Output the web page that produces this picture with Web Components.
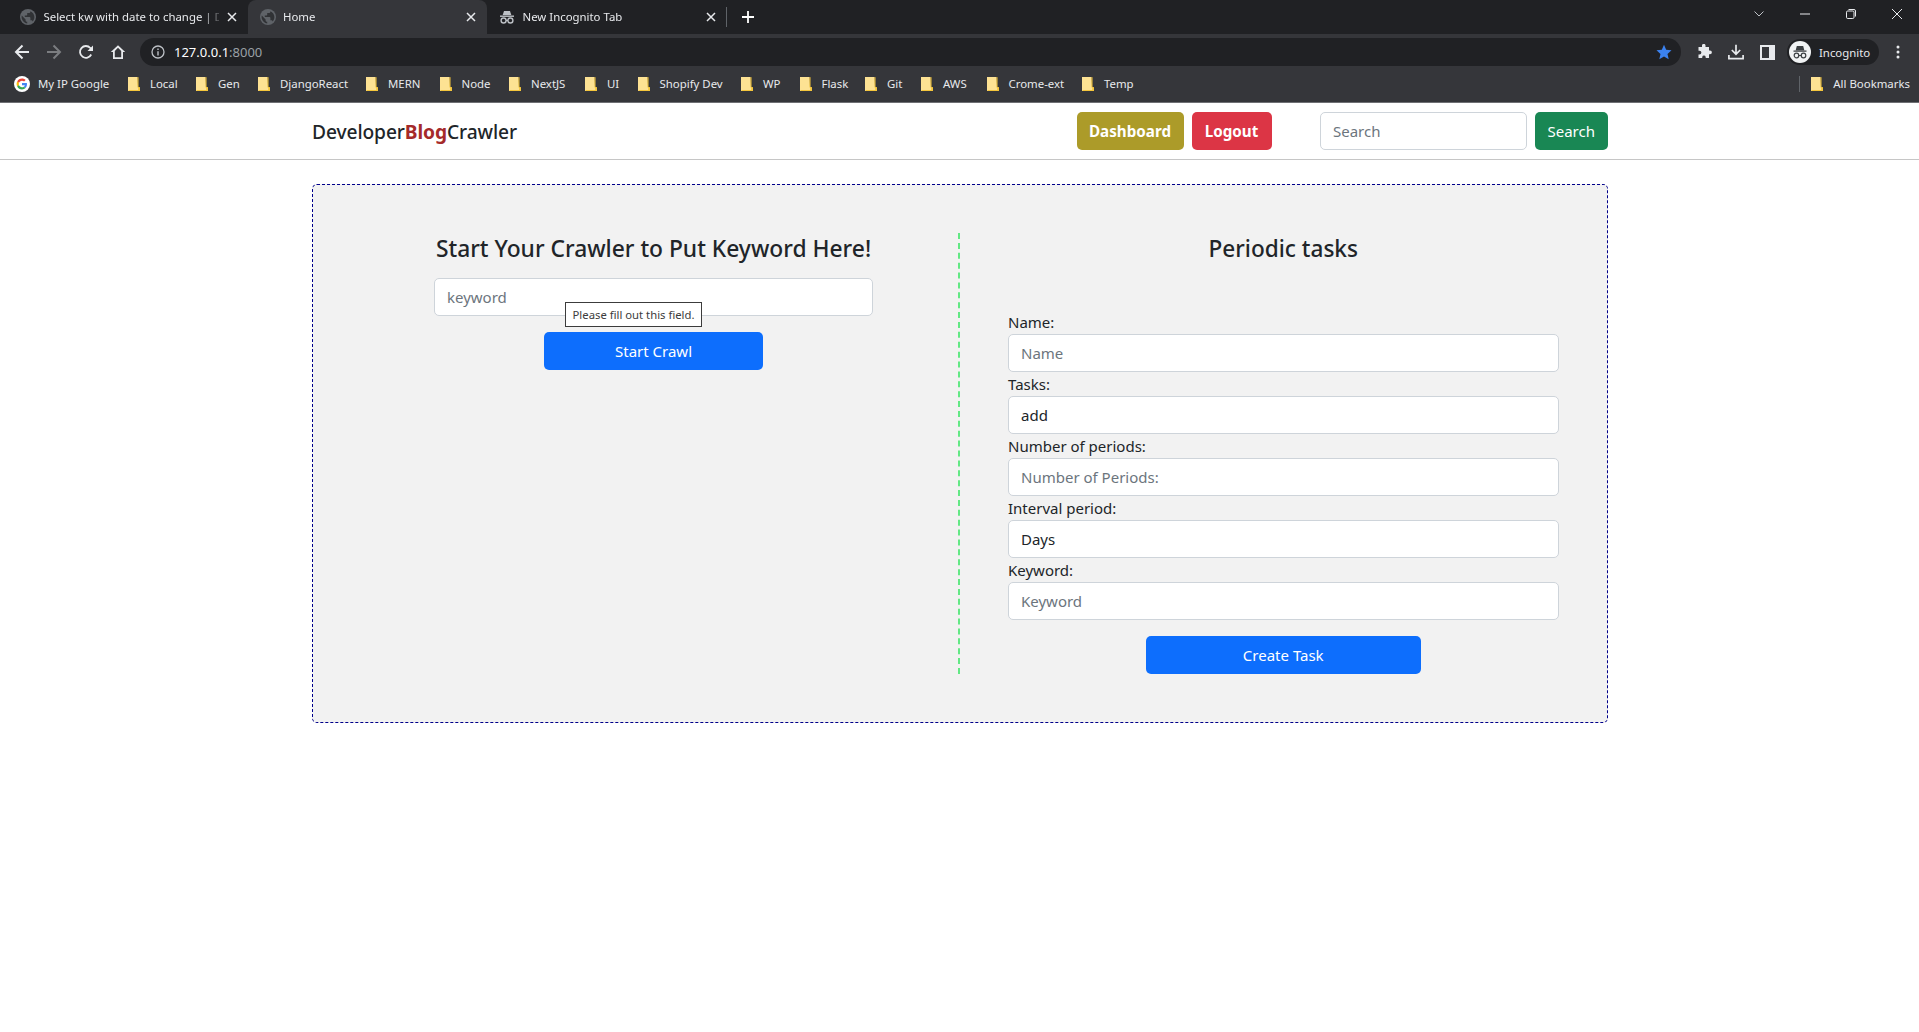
<!DOCTYPE html>
<html lang="en"><head><meta charset="utf-8"><title>Home</title>
<style>
html,body{margin:0;padding:0;background:#fff;height:100%}
body{font-family:"Noto Sans","Liberation Sans",sans-serif;font-size:15px;color:#212529;overflow:hidden}
</style></head><body>
<browser-frame>
  <tab-strip>
    <browser-tab title-text="Select kw with date to change | D" icon="globe"></browser-tab>
    <browser-tab title-text="Home" icon="globe" active></browser-tab>
    <browser-tab title-text="New Incognito Tab" icon="spy"></browser-tab>
  </tab-strip>
  <tool-bar></tool-bar>
  <bookmark-bar>
    <bookmark-item label="My IP Google" icon="google" w="114"></bookmark-item>
    <bookmark-item label="Local" w="68"></bookmark-item>
    <bookmark-item label="Gen" w="62"></bookmark-item>
    <bookmark-item label="DjangoReact" w="108"></bookmark-item>
    <bookmark-item label="MERN" w="73.5"></bookmark-item>
    <bookmark-item label="Node" w="69.5"></bookmark-item>
    <bookmark-item label="NextJS" w="76"></bookmark-item>
    <bookmark-item label="UI" w="52.5"></bookmark-item>
    <bookmark-item label="Shopify Dev" w="103.5"></bookmark-item>
    <bookmark-item label="WP" w="58.5"></bookmark-item>
    <bookmark-item label="Flask" w="65.5"></bookmark-item>
    <bookmark-item label="Git" w="56"></bookmark-item>
    <bookmark-item label="AWS" w="65.5"></bookmark-item>
    <bookmark-item label="Crome-ext" w="95.5"></bookmark-item>
    <bookmark-item label="Temp" w="60"></bookmark-item>
    <bookmark-item slot="end" label="All Bookmarks"></bookmark-item>
  </bookmark-bar>
</browser-frame>
<site-nav></site-nav>
<crawler-panel>
  <crawl-form slot="left"></crawl-form>
  <task-form slot="right">
    <form-field label="Name:" placeholder="Name"></form-field>
    <form-field label="Tasks:" value="add"></form-field>
    <form-field label="Number of periods:" placeholder="Number of Periods:"></form-field>
    <form-field label="Interval period:" value="Days"></form-field>
    <form-field label="Keyword:" placeholder="Keyword"></form-field>
  </task-form>
</crawler-panel>
<script>
const ICONS={
globe:`<svg width="16" height="16" viewBox="0 0 16 16"><circle cx="8" cy="8" r="8" fill="#5f6368"/><path d="M7.2 14.4C4 14 1.6 11.3 1.6 8c0-.5.1-1 .2-1.4L5.6 10.4v.8c0 .9.7 1.6 1.6 1.6zM12.7 12.4c-.2-.6-.8-1.100-1.500-1.100h-.8V8.900c0-.4-.4-.8-.8-.8H4.800V6.500h1.600c.4 0 .8-.4.8-.8V4.100h1.600c.9 0 1.600-.7 1.600-1.600v-.3c2.300.9 4 3.200 4 5.800 0 1.700-.7 3.200-1.700 4.400z" fill="#202124" opacity=".75"/></svg>`,
spy:`<svg width="16" height="16" viewBox="0 0 16 16" fill="#bdc1c6"><path d="M5 2h6l1.300 4H3.700z"/><rect x="1" y="6.500" width="14" height="1.400"/><circle cx="4.600" cy="11.500" r="2.500" fill="none" stroke="#bdc1c6" stroke-width="1.400"/><circle cx="11.400" cy="11.500" r="2.500" fill="none" stroke="#bdc1c6" stroke-width="1.400"/><path d="M7 11h2v1H7z"/></svg>`,
x:`<svg width="10" height="10" viewBox="0 0 10 10"><path d="M1 1l8 8M9 1l-8 8" stroke="#e8eaed" stroke-width="1.500" fill="none"/></svg>`,
plus:`<svg width="12" height="12" viewBox="0 0 12 12"><path d="M6 0v12M0 6h12" stroke="#fff" stroke-width="1.800" fill="none"/></svg>`,
chev:`<svg width="12" height="8" viewBox="0 0 12 8"><path d="M1.500 1.500L6 6l4.500-4.500" stroke="#bdc1c6" stroke-width="1" fill="none"/></svg>`,
min:`<svg width="10" height="10" viewBox="0 0 10 10"><path d="M0 5h10" stroke="#e8eaed" stroke-width="1" fill="none"/></svg>`,
max:`<svg width="10" height="10" viewBox="0 0 10 10"><rect x=".5" y="2" width="7.500" height="7.500" rx="1.200" stroke="#e8eaed" fill="none"/><path d="M2.500 .5h5.500a1.500 1.500 0 0 1 1.500 1.500v5.500" stroke="#e8eaed" fill="none"/></svg>`,
close:`<svg width="10" height="10" viewBox="0 0 10 10"><path d="M0 0l10 10M10 0L0 10" stroke="#e8eaed" stroke-width="1" fill="none"/></svg>`,
back:`<svg width="16" height="16" viewBox="0 0 16 16"><path d="M15 8H2M8.500 1.500L2 8l6.500 6.500" stroke="#e8eaed" stroke-width="2" fill="none"/></svg>`,
fwd:`<svg width="16" height="16" viewBox="0 0 16 16"><path d="M1 8h13M7.500 1.500L14 8l-6.500 6.500" stroke="#7b7d80" stroke-width="2" fill="none"/></svg>`,
reload:`<svg width="16" height="16" viewBox="0 0 16 16"><path d="M13.200 10.500A5.900 5.900 0 1 1 12.300 4L14 5.700" stroke="#e8eaed" stroke-width="1.800" fill="none"/><path d="M15 1.500V7H9.500z" fill="#e8eaed"/></svg>`,
home:`<svg width="16" height="16" viewBox="0 0 16 16"><path d="M8 1.200L.8 8H3v7h10V8h2.200zM4.800 13.300V6.900L8 3.800l3.200 3.100v6.400z" fill="#e8eaed" fill-rule="evenodd"/></svg>`,
info:`<svg width="14" height="14" viewBox="0 0 14 14"><circle cx="7" cy="7" r="6" stroke="#bdc1c6" stroke-width="1.300" fill="none"/><path d="M6.300 6.200h1.400v4.200H6.300zM6.300 3.600h1.400V5H6.300z" fill="#bdc1c6"/></svg>`,
star:`<svg width="16" height="16" viewBox="0 0 16 16"><path d="M8 .8l2.200 4.900 5.300.6-4 3.600 1.200 5.300L8 12.500l-4.700 2.700 1.200-5.300-4-3.600 5.300-.6z" fill="#3b82f0"/></svg>`,
ext:`<svg width="16" height="16" viewBox="0 0 16 16"><path d="M6 1.200a1.800 1.800 0 0 1 3.500 0V3h3.500v3.400h1a1.900 1.900 0 0 1 0 3.800h-1V14H9.700v-1a1.800 1.800 0 0 0-3.500 0v1H2.500v-3.500h1a1.900 1.900 0 0 0 0-3.800h-1V3H6z" fill="#e8eaed"/></svg>`,
dl:`<svg width="16" height="16" viewBox="0 0 16 16"><path d="M8 .8v9M3.800 6L8 10.200 12.200 6M.9 11v3.600h14.200V11" stroke="#e8eaed" stroke-width="1.700" fill="none"/></svg>`,
side:`<svg width="15" height="15" viewBox="0 0 15 15"><rect width="15" height="15" fill="#e8eaed"/><rect x="2" y="2" width="7" height="11" fill="#35363a"/></svg>`,
avatar:`<svg width="22" height="22" viewBox="0 0 22 22"><circle cx="11" cy="11" r="11" fill="#f1f3f4"/><path d="M7.800 5h6.400l1.100 4.200H6.700zM4.500 9.500h13v1.200h-13z" fill="#3c4043"/><circle cx="7.500" cy="14.500" r="2.300" fill="none" stroke="#3c4043" stroke-width="1.200"/><circle cx="14.500" cy="14.500" r="2.300" fill="none" stroke="#3c4043" stroke-width="1.200"/><path d="M9.500 14h3v1h-3z" fill="#3c4043"/></svg>`,
dots:`<svg width="4" height="14" viewBox="0 0 4 14"><circle cx="2" cy="2" r="1.500" fill="#e8eaed"/><circle cx="2" cy="7" r="1.500" fill="#e8eaed"/><circle cx="2" cy="12" r="1.500" fill="#e8eaed"/></svg>`,
google:`<svg width="16" height="16" viewBox="0 0 16 16"><circle cx="8" cy="8" r="8" fill="#fff"/><g transform="translate(2.600 2.600) scale(.225)"><path fill="#ea4335" d="M24 9.500c3.500 0 6.700 1.200 9.200 3.600l6.900-6.900C35.900 2.400 30.500 0 24 0 14.600 0 6.500 5.400 2.600 13.200l8 6.200C12.400 13.700 17.700 9.500 24 9.500z"/><path fill="#4285f4" d="M46.100 24.500c0-1.600-.1-3.100-.4-4.500H24v9h12.400c-.5 2.900-2.200 5.400-4.700 7l7.700 6c4.500-4.100 6.700-10.200 6.700-17.500z"/><path fill="#fbbc05" d="M10.500 28.600c-.5-1.400-.8-3-.8-4.600s.3-3.200.8-4.600l-8-6.200C.9 16.500 0 20.100 0 24s.9 7.500 2.600 10.800z"/><path fill="#34a853" d="M24 48c6.500 0 11.900-2.100 15.900-5.800l-7.700-6c-2.200 1.500-4.900 2.300-8.200 2.300-6.300 0-11.600-4.200-13.500-10l-8 6.200C6.500 42.600 14.600 48 24 48z"/></g></svg>`,
folder:`<svg width="12" height="14" viewBox="0 0 12 14"><path d="M0 0h9.500l.5 10.500h2V14H0z" fill="#fde293"/><path d="M.5 13.500h10.500M10 .2V10.500h1.800" stroke="#f5c63c" stroke-width="1" fill="none"/><path d="M10.300 11h1.700v3h-2z" fill="#f5c63c"/></svg>`
};
const def=(name,html,init)=>customElements.define(name,class extends HTMLElement{
  connectedCallback(){ if(this.shadowRoot)return; this.attachShadow({mode:'open'}).innerHTML=typeof html==='function'?html(this):html; if(init)init(this);}
});
const BTN=`.btn{box-sizing:border-box;display:flex;align-items:center;justify-content:center;height:38px;border:0;border-radius:5px;color:#fff;font:inherit;line-height:24px}`;
const INP=`input{box-sizing:border-box;display:block;width:100%;height:38px;padding:6px 12px;border:1px solid #ced4da;border-radius:5px;background:#fff;color:#212529;font:inherit;outline:0}input::placeholder{color:#6c757d;opacity:1}`;

def('browser-frame',`<style>:host{display:block;background:#35363a;color:#e8eaed;font-size:11.400px}</style><slot></slot>`);
def('tab-strip',`<style>:host{display:flex;height:34px;background:#202124;padding-left:8px;align-items:stretch}
.wrap{display:flex}.sep{width:1px;height:20px;background:#5f6368;align-self:center;margin-left:-1px}
.plus{width:42px;display:flex;align-items:center;justify-content:center}
.ctl{width:46px;display:flex;align-items:center;justify-content:center}
.win{display:flex;margin-left:auto;margin-right:-1px;padding-bottom:6px}</style>
<div class="wrap"><slot></slot></div><div class="sep"></div><div class="plus">${ICONS.plus}</div>
<div class="win"><div class="ctl">${ICONS.chev}</div><div class="ctl">${ICONS.min}</div><div class="ctl">${ICONS.max}</div><div class="ctl">${ICONS.close}</div></div>`);
def('browser-tab',el=>`<style>:host{box-sizing:border-box;display:flex;align-items:center;width:239.500px;padding:0 11px 0 12px;gap:7.500px;color:#e8eaed}
:host([active]){background:#35363a;border-radius:8px 8px 0 0}
.ic{width:16px;height:16px;flex:none}.t{flex:1;min-width:0;margin-top:-1px;white-space:nowrap;-webkit-mask-image:linear-gradient(90deg,#000 90%,rgba(0,0,0,.25) 100%);mask-image:linear-gradient(90deg,#000 90%,rgba(0,0,0,.25) 100%)}
.x{width:10px;height:10px;flex:none;display:flex}svg{display:block}</style>
<span class="ic">${ICONS[el.getAttribute('icon')]}</span><span class="t">${el.getAttribute('title-text')}</span><span class="x">${ICONS.x}</span>`);
def('tool-bar',`<style>:host{display:flex;align-items:center;height:36px;padding-left:6px;padding-right:5px;background:#35363a}
.b{width:32px;height:32px;display:flex;align-items:center;justify-content:center;flex:none}
.omni{flex:1;height:28px;margin:0 6.500px 0 6px;border-radius:14px;background:#202124;display:flex;align-items:center;padding:0 9px 0 11px;font-size:13px}
.u{margin-left:9px;color:#fff}.u i{font-style:normal;color:#9aa0a6}.star{margin-left:auto;display:flex}
.pill{width:92px;height:26px;box-sizing:border-box;margin:0 3px 0 3.500px;border-radius:13px;background:#202124;display:flex;align-items:center;padding-left:2px;gap:8px;color:#e8eaed;font-size:11.400px;flex:none}
svg{display:block}</style>
<div class="b">${ICONS.back}</div><div class="b">${ICONS.fwd}</div><div class="b">${ICONS.reload}</div><div class="b">${ICONS.home}</div>
<div class="omni">${ICONS.info}<span class="u">127.0.0.1<i>:8000</i></span><span class="star">${ICONS.star}</span></div>
<div class="b">${ICONS.ext}</div><div class="b">${ICONS.dl}</div><div class="b">${ICONS.side}</div>
<div class="pill">${ICONS.avatar}<span>Incognito</span></div><div class="b">${ICONS.dots}</div>`);
def('bookmark-bar',`<style>:host{display:flex;box-sizing:content-box;height:27px;padding:0 9px 5px 14px;background:#35363a;border-bottom:1px solid #6f7074;align-items:center}
.end{margin-left:auto;display:flex;align-items:center}.s{width:1px;height:16px;background:#5f6368;margin-right:11px}</style>
<slot></slot><div class="end"><div class="s"></div><slot name="end"></slot></div>`);
def('bookmark-item',el=>`<style>:host{display:flex;align-items:center;flex:none;white-space:nowrap;color:#e8eaed;${el.hasAttribute('w')?`width:${el.getAttribute('w')}px`:''}}
.i{margin-right:${el.getAttribute('icon')==='google'?'8':'10'}px;display:flex}svg{display:block}</style>
<span class="i">${ICONS[el.getAttribute('icon')||'folder']}</span><span>${el.getAttribute('label')}</span>`);
def('site-nav',`<style>:host{display:block;height:56px;border-bottom:1px solid #c6c6c6;background:#fff}
.in{width:1296px;height:56px;margin:0 auto;display:flex;align-items:center}
.brand{margin:1px 0 0 .5px;font-size:19.200px;font-weight:500;color:#212529;letter-spacing:-.1px}.brand b{color:#a52a2a;font-weight:700}
.r{margin-left:auto;display:flex;align-items:center}${BTN}${INP}
.d{width:107px;background:#ac9b29;font-weight:700;font-size:15.200px}.l{width:80px;margin:0 48.500px 0 8px;background:#dc3545;font-weight:700;font-size:15.200px}
.f{width:206.500px}.s{width:72.500px;margin-left:8.500px;background:#198754}</style>
<div class="in"><div class="brand">Developer<b>Blog</b>Crawler</div>
<div class="r"><button class="btn d">Dashboard</button><button class="btn l">Logout</button><div class="f"><input placeholder="Search"></div><button class="btn s">Search</button></div></div>`);
def('crawler-panel',`<style>:host{box-sizing:border-box;display:flex;width:1296px;margin:24px auto 0;padding:48px;border:1px dashed #00008b;border-radius:5px;background:#f2f2f2}
.l{width:584px;flex:none;margin:0 12.500px 0 1px}.r{flex:1;min-width:0;border-left:2px dashed #62e884;padding-left:48px}</style>
<div class="l"><slot name="left"></slot></div><div class="r"><slot name="right"></slot></div>`);
def('crawl-form',`<style>:host{display:block;position:relative}${BTN}${INP}
h4{margin:1px 0 15px;font-size:22.800px;font-weight:500;line-height:29px;text-align:center}
.f{width:439px;margin:0 auto}.btn{width:219px;margin:16px auto 0}
.tip{position:absolute;left:203.500px;top:68px;box-sizing:border-box;height:25px;width:137px;border:1px solid #3c3c3c;background:#fff;color:#3c3c3c;font-size:11.300px;display:flex;align-items:center;justify-content:center;white-space:nowrap}</style>
<h4>Start Your Crawler to Put Keyword Here!</h4><div class="f"><input placeholder="keyword"></div><button class="btn" style="background:#0d6efd">Start Crawl</button>
<div class="tip">Please fill out this field.</div>`);
def('task-form',`<style>:host{display:block}${BTN}
h4{margin:1px 0 47px;font-size:22.600px;font-weight:500;line-height:29px;text-align:center}
.btn{width:275px;margin:16px auto 0;background:#0d6efd}</style>
<h4>Periodic tasks</h4><slot></slot><button class="btn">Create Task</button>`);
def('form-field',el=>`<style>:host{display:block}${INP}label{display:block;line-height:24px}</style>
<label>${el.getAttribute('label')}</label><input ${el.hasAttribute('placeholder')?`placeholder="${el.getAttribute('placeholder')}"`:''} ${el.hasAttribute('value')?`value="${el.getAttribute('value')}"`:''}>`);
</script>
</body></html>
